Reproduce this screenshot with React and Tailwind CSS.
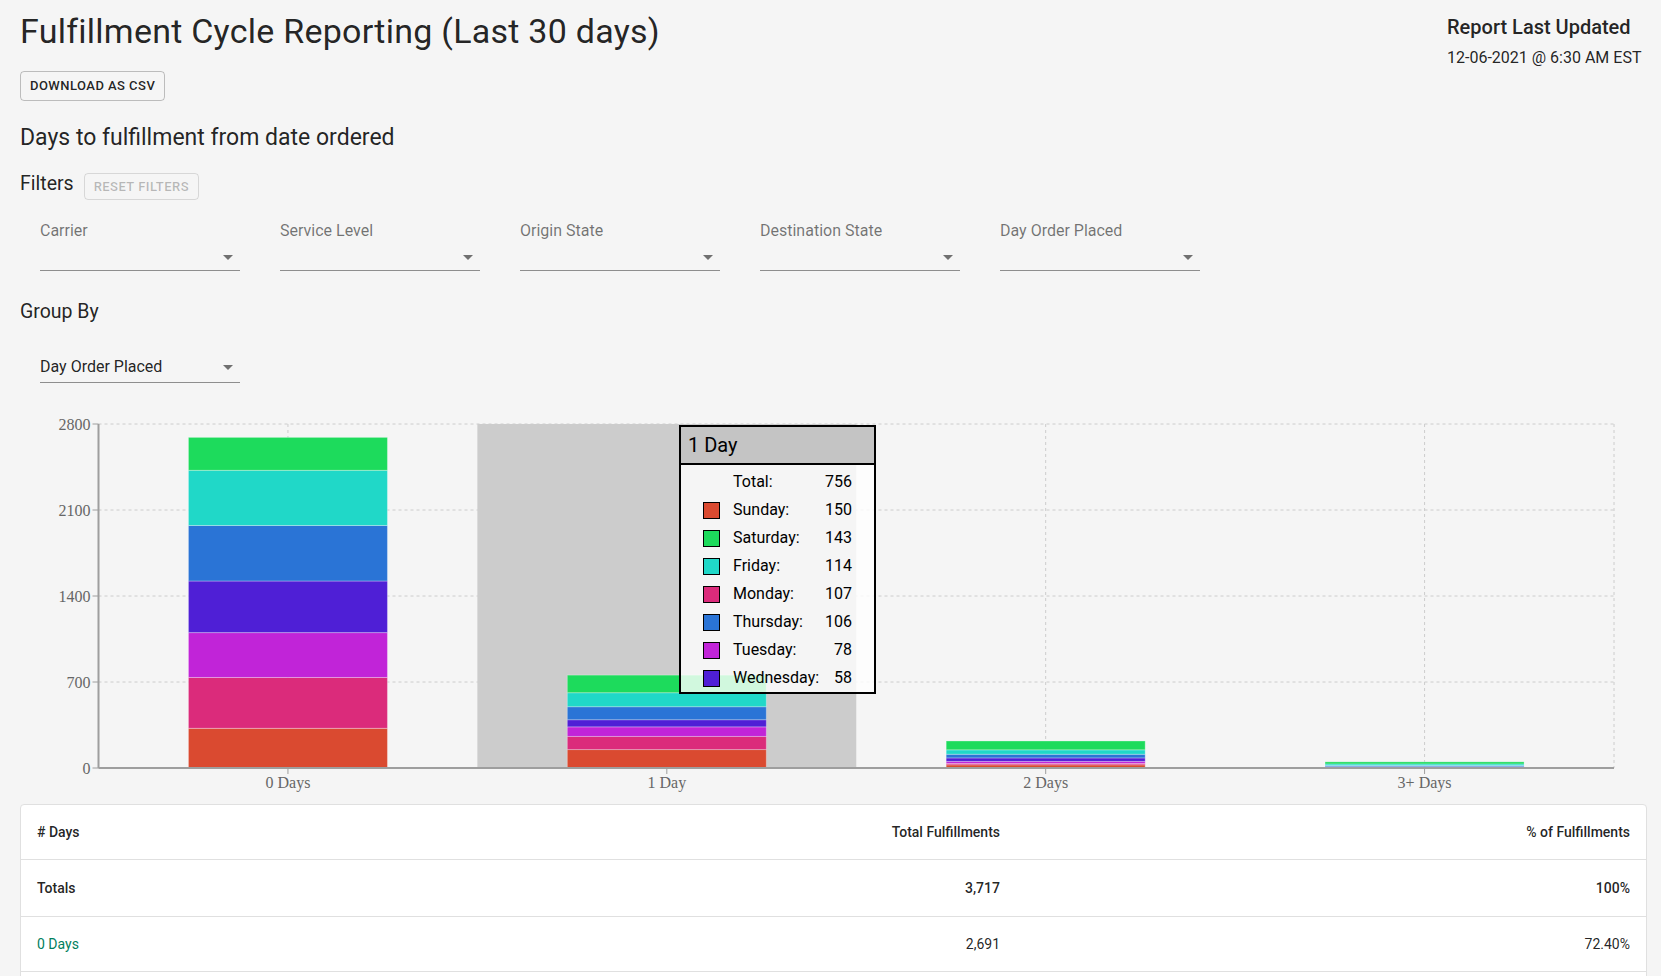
import React from 'react';

const DAYS = [
  { key: 'Sunday', color: '#DA4A30' },
  { key: 'Monday', color: '#DB2B7B' },
  { key: 'Tuesday', color: '#C124D8' },
  { key: 'Wednesday', color: '#4F1FD6' },
  { key: 'Thursday', color: '#2A74D6' },
  { key: 'Friday', color: '#20D8C8' },
  { key: 'Saturday', color: '#1DDB5C' },
];

const DATA = [
  { name: '0 Days', Sunday: 323, Monday: 414, Tuesday: 365, Wednesday: 420, Thursday: 452, Friday: 449, Saturday: 268 },
  { name: '1 Day', Sunday: 150, Monday: 107, Tuesday: 78, Wednesday: 58, Thursday: 106, Friday: 114, Saturday: 143 },
  { name: '2 Days', Sunday: 26, Monday: 11, Tuesday: 17, Wednesday: 28, Thursday: 30, Friday: 36, Saturday: 72 },
  { name: '3+ Days', Sunday: 2, Monday: 2, Tuesday: 3, Wednesday: 4, Thursday: 9, Friday: 13, Saturday: 17 },
];

const ROWS = [
  { label: '0 Days', total: '2,691', pct: '72.40%' },
  { label: '1 Day', total: '756', pct: '20.34%' },
  { label: '2 Days', total: '220', pct: '5.92%' },
  { label: '3+ Days', total: '50', pct: '1.35%' },
];

const FILTERS = ['Carrier', 'Service Level', 'Origin State', 'Destination State', 'Day Order Placed'];

function Arrow() {
  return (
    <svg width="24" height="24" viewBox="0 0 24 24" className="shrink-0">
      <path d="M7 10l5 5 5-5z" fill="rgba(0,0,0,0.54)" />
    </svg>
  );
}

function Chart() {
  const W = 1627;
  const H = 390;
  const X0 = 78.5;
  const X1 = 1594;
  const Y0 = 20;
  const Y1 = 364;
  const MAX = 2800;
  const band = (X1 - X0) / DATA.length;
  const y = (v) => Y1 - (v / MAX) * (Y1 - Y0);
  const ticks = [0, 700, 1400, 2100, 2800];
  const serif = { fontFamily: '"Liberation Serif", "Times New Roman", serif', fontSize: 16 };

  return (
    <svg width={W} height={H} className="block">
      {/* grid */}
      {ticks.map((t) => (
        <line key={t} x1={X0} x2={X1} y1={y(t)} y2={y(t)} stroke="#ccc" strokeDasharray="3 3" />
      ))}
      {DATA.map((d, i) => (
        <line key={d.name} x1={X0 + band * (i + 0.5)} x2={X0 + band * (i + 0.5)} y1={Y0} y2={Y1} stroke="#ccc" strokeDasharray="3 3" />
      ))}
      <line x1={X1} x2={X1} y1={Y0} y2={Y1} stroke="#ccc" strokeDasharray="3 3" />

      {/* hover cursor */}
      <rect x={X0 + band} y={Y0} width={band} height={Y1 - Y0} fill="#ccc" />

      {/* stacked bars */}
      {DATA.map((d, i) => {
        const cx = X0 + band * (i + 0.5);
        let acc = 0;
        return (
          <g key={d.name}>
            {DAYS.map((day) => {
              const v = d[day.key];
              const top = y(acc + v);
              const bottom = y(acc);
              acc += v;
              return (
                <rect
                  key={day.key}
                  x={cx - 99.5}
                  y={top}
                  width={199}
                  height={bottom - top}
                  fill={day.color}
                  stroke="#fff"
                  strokeOpacity={0.3}
                  strokeWidth={1}
                />
              );
            })}
          </g>
        );
      })}

      {/* axes */}
      <line x1={X0} x2={X0} y1={Y0} y2={Y1} stroke="#9e9e9e" strokeWidth={2} />
      <line x1={X0} x2={X1} y1={Y1} y2={Y1} stroke="#9e9e9e" strokeWidth={2} />
      {ticks.map((t) => (
        <g key={t}>
          <line x1={X0 - 6} x2={X0} y1={y(t)} y2={y(t)} stroke="#9e9e9e" />
          <text x={X0 - 8} y={y(t)} dy="0.355em" textAnchor="end" fill="#666" style={serif}>
            {t}
          </text>
        </g>
      ))}
      {DATA.map((d, i) => (
        <g key={d.name}>
          <line x1={X0 + band * (i + 0.5)} x2={X0 + band * (i + 0.5)} y1={Y1} y2={Y1 + 6} stroke="#9e9e9e" />
          <text x={X0 + band * (i + 0.5)} y={Y1 + 14} dy="0.355em" textAnchor="middle" fill="#666" style={serif}>
            {d.name}
          </text>
        </g>
      ))}
    </svg>
  );
}

function Tooltip() {
  const d = DATA[1];
  const total = DAYS.reduce((s, day) => s + d[day.key], 0);
  const sorted = [...DAYS].sort((a, b) => d[b.key] - d[a.key]);
  return (
    <div className="absolute left-[659px] top-[21px] w-[197px] border-2 border-black bg-[rgba(255,255,255,0.8)] text-black">
      <div className="h-[38px] bg-[#c4c4c4] border-b-2 border-black pl-[7px] flex items-center text-[20px]">1 Day</div>
      <div className="pt-[3px] px-[22px] text-base">
        <div className="h-7 flex items-center">
          <span className="w-[17px] h-[17px] shrink-0" />
          <span className="ml-[13px] flex-1">Total:</span>
          <span className="text-right">{total}</span>
        </div>
        {sorted.map((day) => (
          <div key={day.key} className="h-7 flex items-center">
            <span className="w-[17px] h-[17px] shrink-0 border border-black" style={{ backgroundColor: day.color }} />
            <span className="ml-[13px] flex-1">{day.key}:</span>
            <span className="text-right">{d[day.key]}</span>
          </div>
        ))}
      </div>
    </div>
  );
}

export default function App() {
  return (
    <div className="min-h-screen bg-[#f5f5f5] text-[rgba(0,0,0,0.87)] font-[Roboto,Arial,sans-serif] pb-10">
      {/* header */}
      <div className="flex justify-between px-5 pt-[10px]">
        <div>
          <h1 className="text-[34px] leading-[42px] font-normal tracking-[0.25px]">Fulfillment Cycle Reporting (Last 30 days)</h1>
          <button className="mt-[19px] h-[30px] px-[9px] border border-[rgba(0,0,0,0.23)] rounded text-[13px] font-medium uppercase tracking-[0.46px]">
            Download as CSV
          </button>
        </div>
        <div className="w-[194px] shrink-0 whitespace-nowrap pt-px">
          <div className="text-[20px] leading-8 font-medium">Report Last Updated</div>
          <div className="mt-[3px] text-base leading-6">12-06-2021 @ 6:30 AM EST</div>
        </div>
      </div>

      <div className="px-5">
        <h2 className="mt-[21px] text-[23px] leading-8 font-normal">Days to fulfillment from date ordered</h2>

        <div className="mt-[14px] flex items-start">
          <h3 className="text-[19.5px] leading-8 font-normal">Filters</h3>
          <button
            disabled
            className="ml-[10px] mt-[5px] h-[27px] px-[9px] border border-[rgba(0,0,0,0.12)] rounded text-[13px] font-medium uppercase tracking-[0.46px] text-[rgba(0,0,0,0.26)]"
          >
            Reset Filters
          </button>
        </div>

        <div className="mt-[19px] pl-5 flex gap-10">
          {FILTERS.map((f) => (
            <div key={f} className="w-[200px]">
              <div className="text-base leading-6 text-[rgba(0,0,0,0.54)]">{f}</div>
              <div className="h-[28px] border-b border-[rgba(0,0,0,0.42)] flex items-center justify-end">
                <Arrow />
              </div>
            </div>
          ))}
        </div>

        <h3 className="mt-[25px] text-[19.5px] leading-8 font-normal">Group By</h3>

        <div className="mt-[27px] pl-5">
          <div className="w-[200px] flex items-center justify-between border-b border-[rgba(0,0,0,0.42)] pb-[3px]">
            <span className="text-base leading-6">Day Order Placed</span>
            <Arrow />
          </div>
        </div>

        <div className="relative mt-[21px] h-[390px]">
          <Chart />
          <Tooltip />
        </div>
      </div>

      {/* table */}
      <div className="mt-[10px] ml-5 mr-[14px] bg-white border border-[#e0e0e0] rounded text-sm">
        <div className="grid grid-cols-[560px_435px_1fr] h-[55px] items-center border-b border-[#e0e0e0] font-medium">
          <div className="px-4"># Days</div>
          <div className="px-4 text-right">Total Fulfillments</div>
          <div className="px-4 text-right">% of Fulfillments</div>
        </div>
        <div className="grid grid-cols-[560px_435px_1fr] h-[57px] items-center border-b border-[#e0e0e0] font-medium">
          <div className="px-4">Totals</div>
          <div className="px-4 text-right">3,717</div>
          <div className="px-4 text-right">100%</div>
        </div>
        {ROWS.map((r) => (
          <div key={r.label} className="grid grid-cols-[560px_435px_1fr] h-[55px] items-center border-b border-[#e0e0e0] last:border-b-0">
            <div className="px-4 text-[#00805e]">{r.label}</div>
            <div className="px-4 text-right">{r.total}</div>
            <div className="px-4 text-right">{r.pct}</div>
          </div>
        ))}
      </div>
    </div>
  );
}
